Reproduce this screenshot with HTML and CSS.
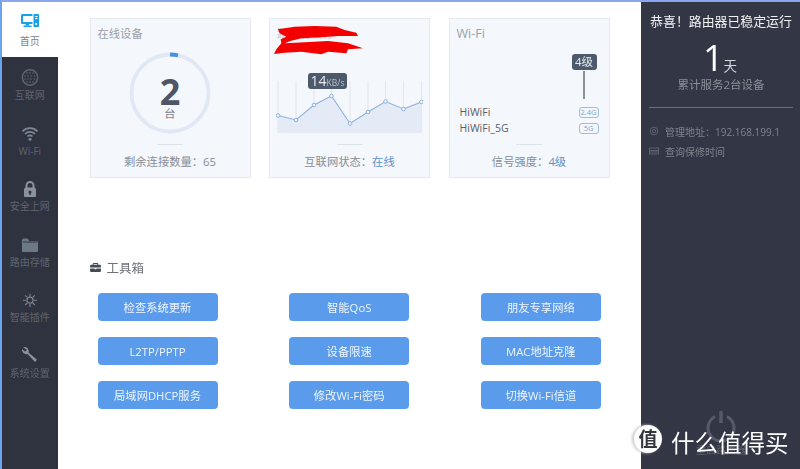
FILE: index.html
```html
<!DOCTYPE html>
<html lang="zh-CN">
<head>
<meta charset="utf-8">
<title>路由器首页</title>
<link rel="stylesheet" href="styles.css">
</head>
<body>
<div class="app">
  <nav class="side">
    <a class="nav-item active">
      <svg class="nav-icon" viewBox="0 0 20 20"><path fill="#19a0e8" d="M1 3.500a1.500 1.500 0 0 1 1.500-1.500h10v2H3v6h9.500v2h-10A1.500 1.500 0 0 1 1 10.500z"/><rect x="5.500" y="12" width="3.500" height="1.500" fill="#19a0e8"/><rect x="3.500" y="13.500" width="8" height="1.500" fill="#19a0e8"/><rect x="13.500" y="2" width="5.500" height="13" rx="1" fill="#19a0e8"/><rect x="15" y="4" width="2.500" height="1" fill="#fff"/><rect x="15" y="6" width="2.500" height="1" fill="#fff"/><circle cx="16.200" cy="12" r="1" fill="#fff"/></svg>
      <span>首页</span>
    </a>
    <a class="nav-item">
      <svg class="nav-icon" viewBox="0 -1.500 20 20"><circle cx="10" cy="10" r="7.700" fill="none" stroke="#5f6672" stroke-width="1.400"/><g fill="#5f6672"><circle cx="7" cy="5.500" r=".8"/><circle cx="10" cy="5.500" r=".8"/><circle cx="13" cy="5.500" r=".8"/><circle cx="5" cy="8.500" r=".8"/><circle cx="8" cy="8.500" r=".8"/><circle cx="11" cy="8.500" r=".8"/><circle cx="14.500" cy="8.500" r=".8"/><circle cx="5" cy="11.500" r=".8"/><circle cx="8" cy="11.500" r=".8"/><circle cx="11" cy="11.500" r=".8"/><circle cx="14.500" cy="11.500" r=".8"/><circle cx="7" cy="14.500" r=".8"/><circle cx="10" cy="14.500" r=".8"/><circle cx="13" cy="14.500" r=".8"/></g></svg>
      <span>互联网</span>
    </a>
    <a class="nav-item">
      <svg class="nav-icon" viewBox="0 -1.500 20 20"><g fill="none" stroke="#7e8794" stroke-width="1.700"><path d="M2.500 7.800a10.500 10.500 0 0 1 15 0"/><path d="M5 10.500a7 7 0 0 1 10 0"/><path d="M7.500 13a3.500 3.500 0 0 1 5 0"/></g><circle cx="10" cy="15.700" r="1.500" fill="#7e8794"/></svg>
      <span>Wi-Fi</span>
    </a>
    <a class="nav-item">
      <svg class="nav-icon" viewBox="0 -2 20 20"><path fill="none" stroke="#8a929e" stroke-width="2" d="M6.500 9V6.500a3.500 3.500 0 0 1 7 0V9"/><rect x="4" y="8.500" width="12" height="10" rx="2" fill="#8a929e"/><circle cx="10" cy="13" r="1.500" fill="#2f323f"/><rect x="9.400" y="13" width="1.200" height="3" fill="#2f323f"/></svg>
      <span>安全上网</span>
    </a>
    <a class="nav-item">
      <svg class="nav-icon" viewBox="0 -2 20 20"><path fill="#6d7885" d="M2 5a1.500 1.500 0 0 1 1.500-1.500h4L9.500 6h7A1.500 1.500 0 0 1 18 7.500V16a1 1 0 0 1-1 1H3a1 1 0 0 1-1-1z"/><path fill="none" stroke="#2f323f" d="M3 7h14"/></svg>
      <span>路由存储</span>
    </a>
    <a class="nav-item">
      <svg class="nav-icon" viewBox="0 0 20 20"><circle cx="10" cy="12.200" r="3" fill="none" stroke="#7e8794" stroke-width="1.200"/><path stroke="#7e8794" stroke-width="1.100" d="M10 5.700v3M10 16v3M3 12.200h3M14 12.200h3M5.200 7.400l2 2M14.800 7.400l-2 2M5.200 17l2-2M14.800 17l-2-2"/></svg>
      <span>智能插件</span>
    </a>
    <a class="nav-item">
      <svg class="nav-icon" viewBox="0 0 20 20"><path fill="#8a929e" d="M3 3.300a4.500 4.500 0 0 1 5.700 5.500l8.300 7-2 2.200-7.400-8A4.500 4.500 0 0 1 2 5l3 2.500 2-1.500z"/></svg>
      <span>系统设置</span>
    </a>
  </nav>

  <main class="main">
    <section class="cards">
      <article class="card">
        <h2 class="card-title">在线设备</h2>
        <div class="card-body">
          <div class="dial">
            <svg class="dial-ring" viewBox="0 0 82 82"><circle cx="41" cy="41" r="38.500" fill="none" stroke="#e0e8f5" stroke-width="3.800"/><path fill="none" stroke="#4a90e2" stroke-width="3.800" d="M41 2.500a38.500 38.500 0 0 1 8 .8"/></svg>
            <div class="dial-num">2</div>
            <div class="dial-unit">台</div>
          </div>
        </div>
        <div class="rule"></div>
        <p class="card-foot">剩余连接数量<span class="punct">：</span>65</p>
      </article>

      <article class="card">
        <h2 class="card-title ghost">路由器名称</h2>
        <svg class="scribble" viewBox="0 0 270 90"><path fill="#f40000" d="M12 13L62 5 122 3 187 5 212 15 247 23 252 33 192 33 142 37 82 40 52 47 32 55 92 52 162 48 222 55 267 70 222 73 217 85 162 80 142 88 82 80 32 83 0 87 7 73 22 55 20 43 37 35 17 25z"/></svg>
        <div class="chart-wrap">
          <div class="tip tip-speed"><b>14</b><small>KB/s</small></div>
          <svg class="chart" viewBox="0 0 147 56">
            <g stroke="#e3e6ec" stroke-width="1"><path d="M2 2v52M20 2v52M38 2v52M55.500 2v52M74 2v52M92 2v52M109.500 2v52M127.500 2v52M145.500 2v52"/></g>
            <path fill="#e4ebf7" d="M2 36.500L20 41 38 26 55.500 17 74 44.500 92 33 109.500 22.500 127.500 30 145.500 23V54H2z"/>
            <path fill="none" stroke="#8fb2dc" stroke-width="1.100" d="M2 36.500L20 41 38 26 55.500 17 74 44.500 92 33 109.500 22.500 127.500 30 145.500 23"/>
            <g fill="#f6f9fd" stroke="#8fb2dc" stroke-width="1"><circle cx="2" cy="36.500" r="1.800"/><circle cx="20" cy="41" r="1.800"/><circle cx="38" cy="26" r="1.800"/><circle cx="55.500" cy="17" r="1.800"/><circle cx="74" cy="44.500" r="1.800"/><circle cx="92" cy="33" r="1.800"/><circle cx="109.500" cy="22.500" r="1.800"/><circle cx="127.500" cy="30" r="1.800"/><circle cx="145.500" cy="23" r="1.800"/></g>
          </svg>
        </div>
        <div class="rule"></div>
        <p class="card-foot">互联网状态<span class="punct">：</span><em>在线</em></p>
      </article>

      <article class="card">
        <h2 class="card-title wifi-title">Wi-Fi</h2>
        <div class="signal">
          <div class="tip tip-level">4级</div>
          <div class="signal-bar"></div>
        </div>
        <ul class="ssids">
          <li><span>HiWiFi</span><i class="band">2.4G</i></li>
          <li><span>HiWiFi_5G</span><i class="band">5G</i></li>
        </ul>
        <div class="rule"></div>
        <p class="card-foot">信号强度<span class="punct">：</span><em>4级</em></p>
      </article>
    </section>

    <section class="tools">
      <h3 class="tools-title">
        <svg class="tools-icon" viewBox="0 0 12 10"><path fill="#454a55" d="M4 0h4a1 1 0 0 1 1 1v1h2a1 1 0 0 1 1 1v2H0V3a1 1 0 0 1 1-1h2V1a1 1 0 0 1 1-1zm0 1v1h4V1zM0 6h5v1h2V6h5v3a1 1 0 0 1-1 1H1a1 1 0 0 1-1-1z"/></svg>
        工具箱
      </h3>
      <div class="tool-grid">
        <button class="tool">检查系统更新</button>
        <button class="tool">智能QoS</button>
        <button class="tool">朋友专享网络</button>
        <button class="tool">L2TP/PPTP</button>
        <button class="tool">设备限速</button>
        <button class="tool">MAC地址克隆</button>
        <button class="tool">局域网DHCP服务</button>
        <button class="tool">修改Wi-Fi密码</button>
        <button class="tool">切换Wi-Fi信道</button>
      </div>
    </section>
  </main>

  <aside class="panel">
    <h2 class="panel-title">恭喜<span class="punct">！</span>路由器已稳定运行</h2>
    <div class="uptime"><b>1</b><span>天</span></div>
    <p class="served">累计服务2台设备</p>
    <div class="panel-rule"></div>
    <ul class="panel-list">
      <li>
        <svg class="panel-icon" viewBox="0 0 10 10"><circle cx="5" cy="5" r="3.800" fill="none" stroke="#5d616c"/><circle cx="5" cy="5" r="1.700" fill="none" stroke="#5d616c"/></svg>
        <span>管理地址<span class="punct">：</span>192.168.199.1</span>
      </li>
      <li>
        <svg class="panel-icon" viewBox="0 0 10 10"><rect x=".5" y="2" width="9" height="6" fill="none" stroke="#5d616c"/><path stroke="#5d616c" d="M.5 4.500h9M.5 6h9"/></svg>
        <span>查询保修时间</span>
      </li>
    </ul>
    <div class="power">
      <svg class="power-icon" viewBox="0 0 32 32"><path fill="none" stroke="#555b6b" stroke-width="3" d="M10 6.500a13 13 0 1 0 12 0"/><path stroke="#555b6b" stroke-width="3.500" d="M16 1v12"/></svg>
      <span>重启路由器</span>
    </div>
  </aside>

  <div class="watermark">
    <span class="wm-badge">值</span>
    <span class="wm-text">什么值得买</span>
  </div>
</div>
</body>
</html>
```
FILE: styles.css
```css
* { box-sizing: border-box; }
html, body { margin: 0; height: 100%; }
body {
  width: 800px;
  height: 469px;
  overflow: hidden;
  background: #fff;
  font-family: "Open Sans", "Noto Sans CJK SC", sans-serif;
  color: #888d96;
}
h2, h3, p, ul { margin: 0; padding: 0; font-weight: 400; }
ul { list-style: none; }
em, i { font-style: normal; }
.punct { font-family: "Noto Sans CJK TC", sans-serif; }

.app {
  position: relative;
  display: flex;
  height: 469px;
  border-top: 2px solid #8aa6ee;
  border-left: 2px solid #6aa4ee;
  filter: blur(.35px);
}

/* sidebar */
.side {
  flex: 0 0 55.500px;
  display: flex;
  flex-direction: column;
  background: #2f323f;
}
.nav-item {
  flex: 0 0 55.500px;
  display: flex;
  flex-direction: column;
  align-items: center;
  padding-top: 9px;
  font-size: 10px;
  line-height: 15px;
  color: #5f6570;
}
.nav-item.active {
  background: #fff;
  color: #7c818a;
  flex-basis: 55px;
  padding-top: 10px;
}
.nav-icon { width: 20px; height: 20px; margin-bottom: 2px; }

/* main */
.main {
  flex: 1;
  padding: 16px 31px 0 32px;
}
.cards { display: flex; gap: 18.500px; }
.card {
  position: relative;
  flex: 0 0 161px;
  height: 160px;
  display: flex;
  flex-direction: column;
  padding: 7px 7px 0;
  background: #f4f7fb;
  border: 1px solid #e6e9ef;
}
.card-title {
  font-size: 11.300px;
  line-height: 16px;
  height: 16px;
  color: #9ba0a9;
}
.card-title.ghost { color: #c2c6cc; }
.wifi-title { font-size: 12.500px; }
.card-body { flex: 1; display: flex; justify-content: center; padding-top: 10px; }
.rule {
  flex: none;
  width: 26px;
  height: 1px;
  margin: 0 auto 8px;
  background: #dfe3ea;
}
.card-foot {
  flex: none;
  height: 24px;
  text-align: center;
  font-size: 11.300px;
  line-height: 17px;
  color: #888d96;
}
.card-foot em { color: #5a93cf; }

/* dial */
.dial {
  position: relative;
  width: 82px;
  height: 82px;
  display: flex;
  flex-direction: column;
  align-items: center;
}
.dial-ring { position: absolute; inset: 0; width: 82px; height: 82px; }
.dial-num {
  margin-top: 26px;
  font-size: 36px;
  line-height: 28px;
  font-weight: 700;
  color: #4e5566;
}
.dial-unit { font-size: 11.300px; line-height: 16px; color: #7d828c; }

/* chart */
.scribble { position: absolute; left: 4px; top: 6px; width: 90px; height: 30px; }
.chart-wrap { position: relative; margin: 37px -7px 0; flex: 1; padding: 0 0 0 6px; }
.chart { display: block; width: 147px; height: 56px; }
.tip {
  position: absolute;
  background: #4d5a6b;
  color: #e8ebef;
  border-radius: 3px;
  text-align: center;
}
.tip-speed {
  left: 38px;
  top: -6px;
  width: 39px;
  height: 16px;
  font-size: 14px;
  line-height: 16px;
}
.tip-speed b { font-weight: 500; }
.tip-speed small { font-size: 8.500px; color: #b8c0ca; }

/* wifi */
.signal {
  height: 71px;
  margin-top: 4px;
  position: relative;
  display: flex;
  justify-content: flex-end;
  padding-right: 17px;
}
.tip-level {
  right: 5px;
  top: 8px;
  width: 25px;
  height: 16px;
  font-size: 11.500px;
  line-height: 16px;
}
.signal-bar {
  width: 1.500px;
  height: 28px;
  margin-top: 25px;
  background: #8b9097;
}
.ssids { flex: 1; padding: 0 3px; margin-top: -13px; }
.ssids li {
  display: flex;
  justify-content: space-between;
  align-items: center;
  height: 16px;
  font-size: 10.500px;
  color: #5b6068;
}
.band {
  width: 20px;
  height: 11px;
  border: 1px solid #9dbde3;
  border-radius: 3px;
  font-size: 7.500px;
  line-height: 9px;
  text-align: center;
  color: #7fa3cf;
}

/* tools */
.tools { margin-top: 82px; }
.tools-title {
  display: flex;
  align-items: center;
  gap: 5px;
  height: 18px;
  font-size: 12.500px;
  line-height: 18px;
  color: #6d7179;
}
.tools-icon { width: 11px; height: 9px; margin: -4px 1px 0 0; }
.tool-grid {
  display: grid;
  grid-template-columns: repeat(3, 120px);
  column-gap: 71.700px;
  row-gap: 16px;
  margin: 15px 0 0 8px;
}
.tool {
  height: 28px;
  padding: 0;
  border: 0;
  border-radius: 4px;
  background: #5b9bec;
  color: #eef5fd;
  font-family: inherit;
  font-size: 11.300px;
}

/* right panel */
.panel {
  flex: 0 0 159px;
  display: flex;
  flex-direction: column;
  padding: 0 7px 0 8px;
  background: #333644;
}
.panel-title {
  margin-top: 10px;
  font-size: 12.900px;
  line-height: 17px;
  text-align: center;
  color: #f0f1f3;
  white-space: nowrap;
}
.uptime {
  display: flex;
  justify-content: center;
  align-items: baseline;
  margin-top: 7px;
  height: 40px;
  padding-right: 2px;
  color: #fff;
}
.uptime b { font-size: 36px; line-height: 42px; font-weight: 400; }
.uptime span { font-size: 13.500px; color: #d5d7db; }
.served {
  font-size: 11.500px;
  line-height: 16px;
  text-align: center;
  color: #8b8f99;
}
.panel-rule { height: 1px; margin-top: 14px; background: #6a6d78; }
.panel-list { margin-top: 13px; }
.panel-list li {
  display: flex;
  align-items: center;
  gap: 6px;
  height: 20px;
  font-size: 10px;
  color: #7f838e;
  white-space: nowrap;
}
.panel-icon { width: 10px; height: 10px; flex: none; }
.power {
  margin-top: auto;
  padding-bottom: 13px;
  display: flex;
  flex-direction: column;
  align-items: center;
  gap: 2px;
  font-size: 10px;
  line-height: 12px;
  color: #5d6270;
}
.power-icon { width: 32px; height: 32px; }

/* watermark over the screenshot */
.watermark {
  position: absolute;
  left: 632px;
  top: 423px;
  display: flex;
  align-items: flex-start;
  gap: 9px;
  height: 32px;
}
.wm-badge {
  width: 28px;
  height: 28px;
  border-radius: 50%;
  background: #fff;
  box-shadow: -2px 0 3px #c9c9c9;
  color: #33363f;
  font-size: 19px;
  line-height: 28px;
  font-weight: 700;
  text-align: center;
}
.wm-text {
  margin-top: 1.500px;
  font-size: 23.500px;
  line-height: 32px;
  color: #fff;
  white-space: nowrap;
}
```
